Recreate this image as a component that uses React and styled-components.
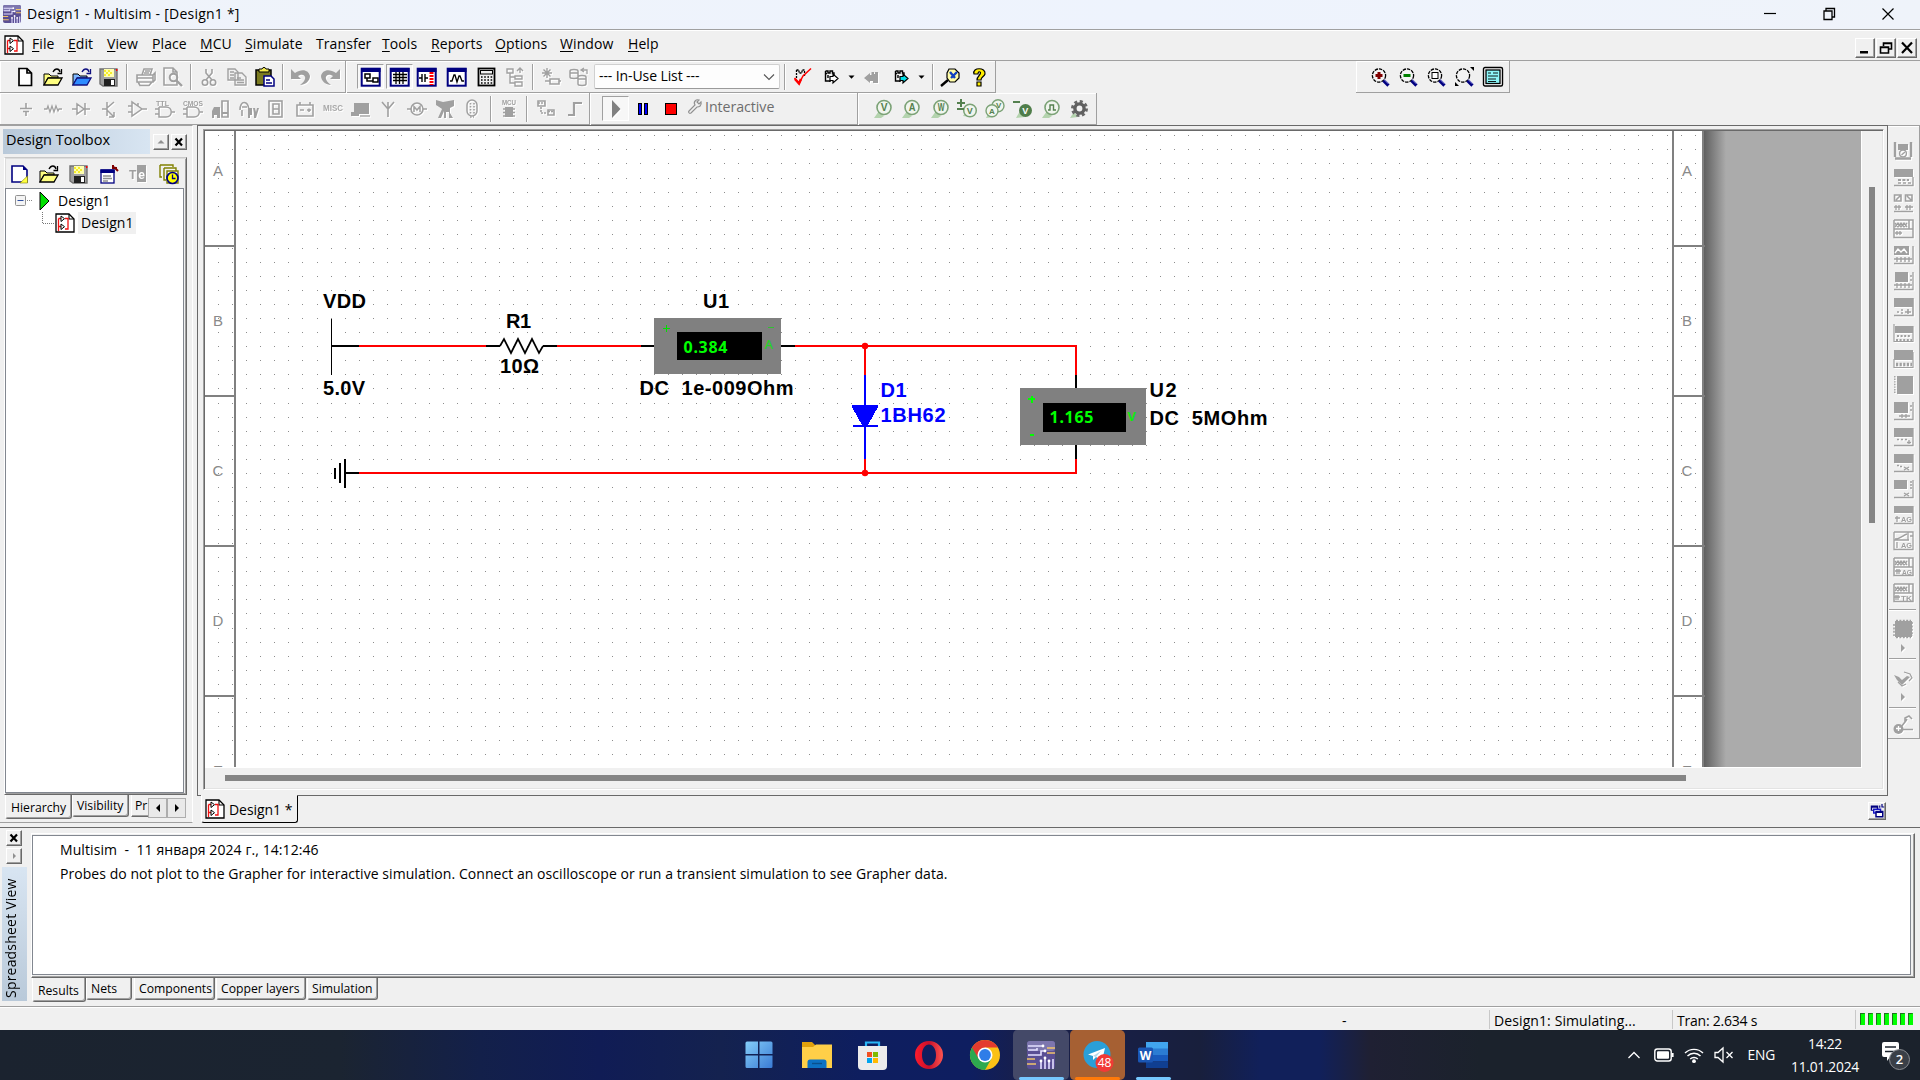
import React from "react";
import styled, { createGlobalStyle, css } from "styled-components";

const UI = `"Open Sans", "Noto Sans", "Liberation Sans", sans-serif`;
const FACE = "#f0f0f0";
const MID = "#a0a0a0";
const DARK = "#696969";

const Global = createGlobalStyle`
  * { box-sizing: border-box; }
  html, body { margin: 0; padding: 0; background: ${FACE}; overflow: hidden; }
  body { font: 14px ${UI}; color: #000; }
`;

const Screen = styled.div`
  width: 1920px; height: 1080px; overflow: hidden;
  display: flex; flex-direction: column; background: ${FACE};
`;
const Txt = styled.span`
  white-space: pre; display: inline-block;
  font-size: ${(p) => p.$s || 14}px;
  line-height: 20px;
  letter-spacing: ${(p) => p.$ls || 0}px;
  color: ${(p) => p.$c || "inherit"};
  padding-bottom: ${(p) => p.$up || 0}px;
`;
const Svg = styled.svg`
  display: block; flex: none; overflow: visible;
  ${(p) => p.$dim && css`filter: drop-shadow(1px 1px 0 #fff);`}
`;

/* ---------- icon drawings, 20 x 20 ---------- */
const K = "#000";
const G = MID;
const N = "#000080";
const P = ({ d, f = "none", s = K, w = 1.3, ...r }) => <path d={d} fill={f} stroke={s} strokeWidth={w} {...r} />;
const T = ({ x, y, s = 7, c = G, children, b, l }) => (
  <text x={x} y={y} fontSize={s} fill={c} fontFamily="Liberation Sans, sans-serif" fontWeight={b ? 700 : 400}
    textLength={l} lengthAdjust="spacingAndGlyphs">{children}</text>
);
const navyWin = (inner) => (
  <>
    <rect x="0.7" y="1.7" width="18" height="17" fill="#fff" stroke={N} strokeWidth="2" />
    <rect x="0" y="1" width="19.5" height="4" fill={N} />
    {inner}
  </>
);
const lens = (inner) => (
  <>
    <circle cx="8" cy="8.5" r="6.6" fill="#f4f4f4" stroke={K} strokeWidth="1.3" strokeDasharray="3.4 1" />
    <path d="M12.5 13.5l5 5" stroke={N} strokeWidth="3.2" />
    <path d="M13 12.4l4.500 4.500" stroke="#c0c0ff" strokeWidth="0.8" />
    {inner}
  </>
);
const schem = (
  <>
    <P d="M1 1H14L19 6V19H1Z" f="#fff" w={1.3} />
    <P d="M14 1V6H19" w={1.1} />
    <P d="M3.5 5.500V18M3.500 5.500H6M3.500 13.500H6M10 5.500H13V16H10" s="#f01010" w={1.3} />
    <P d="M6 3V8.500L9.500 5.700ZM6 11V16.500L9.500 13.700Z" f="#fff" w={1} />
  </>
);
const openFolder = (a, b, arrow) => (
  <>
    <path d="M1 7H6L8 9H15V11H5L1 18Z" fill={a} stroke={K} strokeWidth="1" />
    <path d="M1 18L5 11H19L15 18Z" fill={b} stroke={arrow} strokeWidth="1.3" />
    <P d="M10 5C12 1 16 1 17 5M18.5 2V6.500H14.500" s={arrow} />
  </>
);
const floppy = (
  <>
    <path d="M1 2H18V19H4L1 17Z" fill="#a0a0a0" stroke="#707070" strokeWidth="1.4" />
    <rect x="5" y="2" width="10" height="8" fill="#ffffb0" />
    <path d="M5 4h2M9 4h2M7 6h2M11 6h2M5 8h2M9 8h2" stroke="#f2e600" strokeWidth="1.4" />
    <rect x="5" y="12" width="11" height="7" fill="#202020" />
    <rect x="12" y="13" width="3" height="5" fill="#fff" />
    <rect x="17" y="2" width="1.4" height="2" fill="red" />
  </>
);
const probe = (ch, x = 3) => (
  <>
    <path d="M1 19L6 12L11 17L8 19Z" fill="#b4d3ae" />
    <circle cx={x + 8} cy="8.5" r="7" fill="#f0f5ee" stroke="#7ba276" strokeWidth="1.6" />
    <T x={x + 4.7} y={12.3} s={10} b c="#54804f" l={6.8}>{ch}</T>
  </>
);
const hand = (fill) => (
  <>
    <P d="M3.500 4V14H8V15M3.500 4H6V6H8V4H10.500V6H12V8M3.500 6.500H5M6 8V11" w={1.4} />
    <P d="M8 9.500H11V7L16 11.500L11 16V13.500H8Z" f={fill} w={1.2} />
  </>
);

const ICON = {
  doc: <P d="M4 1.5H12L16.5 6V18.5H4ZM12 1.5V6H16.5" f="#fff" w={1.7} />,
  open: openFolder("#ffff80", "#ffff80", K),
  openBlue: openFolder("#7eb7ff", "#2e8cff", "#101080"),
  save: floppy,
  print: <><P d="M7 8L9 2H17L15 8M2 8H18V15H2ZM3 15L5 18.5H14L17 15M2 11H18M18 8L20 6V13L18 15" s={G} w={1.6} /><P d="M10 4H15M9 6H14" s={G} /></>,
  preview: <><P d="M1 1H10L14 5V18H1ZM10 1V5H14" s={G} w={1.6} /><circle cx="10.5" cy="10.5" r="3.8" fill="none" stroke={G} strokeWidth="2" /><P d="M13 13L19 19" s={G} w={2.4} /></>,
  cut: <><P d="M7 2V6L13 13M13 2V6L7 13" s={G} w={1.6} /><circle cx="6" cy="15.5" r="2.7" fill="none" stroke={G} strokeWidth="1.6" /><circle cx="14" cy="15.5" r="2.7" fill="none" stroke={G} strokeWidth="1.6" /></>,
  copy: <P d="M1 2H8L11 5V13H1ZM8 6H15L19 10V18H8ZM3 5H7M3 8H7M3 11H7M10 11H14M10 13H17M10 15.5H17" f={FACE} s={G} w={1.4} />,
  paste: <><rect x="1" y="3" width="15" height="15" fill="#7b7b20" stroke={K} strokeWidth="1.5" /><path d="M4 5V2H7L8 0.6H10L11 2H14V5Z" fill="#f4ec50" stroke={K} /><path d="M9 9H16L19 12V19H9Z" fill="#fff" stroke={N} strokeWidth="1.5" /><P d="M11 13H15M11 16H17" s={N} /></>,
  undo: <path d="M0 2V12H10L7 9C12 6 15 9 14 12C13 15 11 16 9 18C14 18 19 14 19 9C18 3 11 1 4 6Z" fill={G} />,
  redo: <path d="M20 2V12H10L13 9C8 6 5 9 6 12C7 15 9 16 11 18C6 18 1 14 1 9C2 3 9 1 16 6Z" fill={G} />,
  win1: navyWin(<P d="M4 7H9V11H4ZM12 11H17V15H12ZM6 11V14H12" w={1.5} />),
  win2: navyWin(<P d="M3 7.5H17M3 10.5H17M3 13.5H17M6 5V17M9.5 5V17M13 5V17" w={1.3} />),
  win3: navyWin(<><P d="M2 11H5M5 7V15M8 7V15M8 11H11" w={1.4} /><path d="M14.5 5V18" stroke="red" strokeWidth="4" strokeDasharray="2 1" /></>),
  win4: navyWin(<P d="M3 14H5L7 8H8L10 15L12 9H13L15 14H17" w={1.3} />),
  calc: <><rect x="1.5" y="1.5" width="16" height="17" fill="#f0f0f0" stroke={K} strokeWidth="1.8" /><rect x="3.5" y="3.5" width="12" height="3.5" fill="none" stroke={K} /><path d="M4 10H16M4 13H16M4 16H16" stroke={K} strokeWidth="1.4" strokeDasharray="1.6 1.6" /></>,
  tree: <P d="M2 2H8V6H2ZM5 6V16H10M10 9H17V12H10ZM10 15H17V19H10ZM5 10H10M15 6V1M12 4L15 1L18 4" s={G} w={1.4} />,
  newComp: <><P d="M6 1V11M1 6H11M2.5 2.5L9.5 9.5M9.5 2.5L2.5 9.5" s={G} w={1.4} /><P d="M9 12H18V17H9ZM4 14H9M18 14H20" s={G} w={1.6} /></>,
  database: <><P d="M1 4C1 2 9 2 9 4V10C9 12 1 12 1 10ZM1 6H9M9 10C9 8 17 8 17 10V17C17 19 9 19 9 17ZM9 12H17" s={G} w={1.5} /><P d="M13 3H18V7M15 1L12 3L15 5" s={G} w={1.3} /></>,
  check: <><P d="M3.500 3V12M3.500 3H6V6H9V3H11.500V10" w={1.3} strokeDasharray="2 1" /><P d="M1.500 11L6 16.500L10 9L18 1.500" s="red" w={1.5} /><P d="M2 12L6 16.500L8 12" s="red" w={2.6} /></>,
  handR: hand("#fff"),
  handL: <path d="M2 11L8 6V8H9.500V5H12V7H13V5H16V16H11V14H8V16Z" fill={G} />,
  handC: hand("#00e0e8"),
  find: <><P d="M9 2H15L19 6V11L15 15H10L7 11V6Z" f="#fffca8" w={1.2} /><path d="M10 5L15 11M11 11L17 5" stroke="#1040c0" strokeWidth="2.4" /><P d="M8 13L1 19" w={2.4} /></>,
  help: <><path d="M5 7C3 0 17 0 16 7C15 10 12 10 12 13H8C8 9 12 8 11.5 5.5C10 4 9 5 9 7Z" fill="#ffee00" stroke={K} strokeWidth="1.2" /><path d="M8 15H12V19H8Z" fill="#ffee00" stroke={K} strokeWidth="1.2" /></>,
  zin: lens(<path d="M8 5V12M4.5 8.5H11.5" stroke="#800000" strokeWidth="3" />),
  zout: lens(<path d="M4.5 8.5H11.5" stroke="#008000" strokeWidth="3" />),
  zarea: lens(<rect x="5" y="5.5" width="6" height="6" fill="#fff" stroke={K} />),
  zfit: <>{lens(null)}<path d="M15 0H19V4ZM0 15V19H4Z" fill={K} /></>,
  zfull: <><rect x="0.5" y="0.5" width="19" height="18.5" rx="1.5" fill="#fff" stroke={K} strokeWidth="1.4" /><rect x="3" y="3" width="14" height="13.5" fill="#8df6f8" stroke={K} strokeWidth="1.3" /><P d="M5 6H8M10 6H15M5 9H15M5 12H13M5 14.5H13" w={0.9} /></>,
  /* component row */
  src: <P d="M10 4V9M4 9.5H16M7 12.5H13M10 13V17" s={G} w={1.6} />,
  res: <P d="M1 10H4L5 7L7 13L9 7L11 13L13 7L15 12L16 10H19" s={G} w={1.3} />,
  dio: <P d="M1 10H6M6 5V15L13 10ZM14 4V16M14 10H19" s={G} w={1.5} />,
  tra: <P d="M4 10H9M9 3V17M9 9L16 3M9 11L16 18M16 18V13M16 18H11" s={G} w={1.5} />,
  opa: <P d="M5 3V17L15 10ZM1 7H5M1 13H5M15 10H20M11 4V7" s={G} w={1.5} />,
  ttl: <><P d="M4 8H11C18 8 18 18 11 18H4V8M0 10H4M0 15H4M17 13H20" s={G} w={1.5} /><T x={1} y={6.5} b l={13}>TTL</T></>,
  cmos: <><P d="M4 8H11C18 8 18 18 11 18H4V8M0 10H4M0 15H4M17 13H20" s={G} w={1.5} /><T x={0} y={6.5} b l={20}>CMOS</T></>,
  mdig: <><path d="M3 8H9V19H6V16H3V19H1V12Z" fill={G} /><P d="M11 2H17V18H11Z" s={G} w={1.7} /><P d="M11 14H17" s={G} w={2} /></>,
  mix: <><P d="M1 11C1 1 9 1 10 11M3 8H8M3 11V17" s={G} w={1.6} /><path d="M9 9H13V16H11V19H9ZM14 9H16L17 13L18 9H20L17 19H15V14Z" fill={G} /></>,
  ind: <><rect x="3" y="2" width="13" height="16" fill="none" stroke={G} strokeWidth="1.6" /><P d="M7 5H13V15H7ZM7 10H13" s={G} w={1.6} /></>,
  pow: <P d="M2 6H18V17H2ZM5 3V6M15 3V6M5 11H9M12 11H16M14 9.5V13" s={G} w={1.6} />,
  misc: <T x={0} y={12} s={8.500} b c="#a8a8a8" l={20}>MISC</T>,
  adv: <><path d="M3 4H18V15H3Z" fill={G} /><path d="M0 13H8V17H0Z" fill={G} /><P d="M9 17H19" s={G} /></>,
  rf: <P d="M10 3V18M4 3L10 10L16 3" s={G} w={1.6} />,
  elm: <><circle cx="10" cy="10" r="6" fill="none" stroke={G} strokeWidth="1.6" /><P d="M0 10H4M16 10H20M7 13V7.5L10 11L13 7.5V13" s={G} w={1.5} /></>,
  ni: <path d="M1 1L8 3L19 1V7L15 9V14L18 19H14V13H11V19H9V12L6 19H3L7 10L1 6Z" fill={G} />,
  conn: <><rect x="5" y="1" width="10" height="16" rx="5" fill="none" stroke={G} strokeWidth="1.5" /><path d="M8.5 4V15M12 4V15M8 18H12" stroke={G} strokeWidth="1.6" strokeDasharray="1.6 1.4" /></>,
  mcu: <><T x={3} y={6} b l={14}>MCU</T><path d="M6 8H14V18H6Z" fill={G} /><path d="M4 10H16M4 13.5H16M4 17H16" stroke={G} strokeWidth="1.7" /></>,
  hier: <><path d="M2 2H9V7H2ZM12 11H18V16H12Z" fill="none" stroke={G} strokeWidth="1.6" /><path d="M2 4H9M5 8V14H11M12 12.5H18" stroke={G} strokeWidth="1.6" strokeDasharray="2 1" fill="none" /></>,
  bus: <P d="M4 16H10V4H18" s={G} w={2.2} />,
  play: <path d="M6 1V19L14.5 10Z" fill="#808080" />,
  pause: <><rect x="5.5" y="4.5" width="3" height="11" fill="#0000ff" stroke={K} /><rect x="11.5" y="4.5" width="3" height="11" fill="#0000ff" stroke={K} /></>,
  stop: <rect x="4.5" y="4.5" width="11" height="11" fill="red" stroke={K} />,
  wrench: <P d="M5 12L11 6C9 3 12 0 15 1L13 3L15 5L17 3C18 7 15 8 13 8L7 14C5 15 4 13 5 12Z" s="#909090" w={1.2} />,
  pV: probe("V"), pA: probe("A"), pW: probe("W"),
  pPM: <><path d="M6 17L9 12L14 18Z" fill="#b4d3ae" /><circle cx="13" cy="11.5" r="6.3" fill="#f0f5ee" stroke="#7ba276" strokeWidth="1.5" /><T x={9.8} y={15} s={9} b c="#54804f">V</T><P d="M4 0V8M0 4H8M0 10H7" s="#54804f" w={2} /></>,
  pAV: <><path d="M1 19L4 13L10 18Z" fill="#b4d3ae" /><circle cx="13" cy="6.7" r="6" fill="#f0f5ee" stroke="#7ba276" strokeWidth="1.4" /><circle cx="7" cy="11.7" r="6" fill="#f0f5ee" stroke="#7ba276" strokeWidth="1.4" /><T x={4} y={15} s={8} b c="#54804f">A</T><T x={11} y={8.5} s={8} b c="#54804f">V</T></>,
  pRef: <><path d="M3 19L7 12L12 18Z" fill="#b4d3ae" /><circle cx="12.5" cy="11.5" r="6.5" fill="#4f7d4a" /><T x={9.3} y={15} s={9} b c="#fff">V</T><P d="M0 3H7" s="#54804f" w={2} /></>,
  pDig: <>{probe("")}<P d="M7 11H9V6H12.5V11H15" s="#54804f" w={1.4} /></>,
  gear: <><path d="M1 19L5 13L9 18Z" fill="#b4d3ae" /><circle cx="10.5" cy="9.500" r="7" fill="none" stroke="#686868" strokeWidth="3" strokeDasharray="3 2.5" /><circle cx="10.5" cy="9.500" r="4.600" fill="#f0f0f0" stroke="#606060" strokeWidth="3.4" /></>,
  /* toolbox row */
  newDesign: <><path d="M3 2H14L18 6V18H3Z" fill="#fff" stroke={N} strokeWidth="1.6" /><path d="M14 2V6H18Z" fill={N} /><path d="M18.5 12V19H11Z" fill="#ffff40" stroke="#808000" strokeWidth="0.6" /></>,
  props: <><rect x="2" y="6" width="13" height="13" fill="#fff" stroke={N} strokeWidth="1.3" /><rect x="1.4" y="5.4" width="14.4" height="3.6" fill={N} /><P d="M4 12H12M4 14.5H13M4 17H9" s="#909090" /><P d="M19 7L15 3M14 1V4H18" s="#800000" w={2} /></>,
  rename: <><path d="M8 1H17V18H8Z" fill={G} /><T x={0} y={15} s={12} b>T</T><T x={9.3} y={15} s={12} b c="#fff">e</T></>,
  history: <><P d="M1 1H14V3M1 1V13H3M5 4H17V7M5 4V16H7M8 7H19V19H8Z" s="#808000" w={1.4} f="#fbfbf0" /><circle cx="13.5" cy="14" r="5.5" fill="#ffff00" stroke={N} strokeWidth="1.7" /><P d="M13.5 10.5V14.5H16.5" s={N} /></>,
  run: <path d="M5 1V19L14 10Z" fill="#00e000" stroke={K} strokeWidth="1" />,
  schem,
  cascade: <><path d="M1 2H11V9H1Z" fill={N} /><path d="M4 6H15V13H4Z" fill="#1414c8" /><path d="M7 9H18V18H7Z" fill={N} /><path d="M9 12H16V16H9Z" fill="#fff" /><path d="M3 5H9V6H4V8H3ZM6 8H13V9H7V11H6Z" fill="#fff" /><path d="M13 2V5M16 0V4H19" stroke={N} strokeWidth="1.6" fill="none" /></>,
};

const Icon = ({ n, size = 20, dim }) => (
  <Svg width={size} height={size} viewBox="0 0 20 20" $dim={dim} shapeRendering="auto">{ICON[n]}</Svg>
);

/* ---------- title + menu ---------- */
const TitleBar = styled.div`
  height: 29px; flex: none; background: linear-gradient(90deg, #eff3fa, #eef3fd 60%, #eff3fa);
  display: flex; align-items: center; padding: 0 0 1px 3px;
`;
const TitleText = styled.div`padding-left: 6px; flex: 1; line-height: 20px;`;
const WinButtons = styled.div`display: flex; gap: 39px; padding-right: 22px;`;
const Spacer = styled.div`width: ${(p) => p.$w}px; flex: none;`;

const MenuBar = styled.div`
  height: 32px; flex: none; border-top: 1px solid ${MID}; border-bottom: 1px solid ${MID};
  box-shadow: inset 0 1px #fff; display: flex; align-items: center; padding-left: 4px;
`;
const MenuItem = styled.div`width: ${(p) => p.$w}px; line-height: 28px; padding-bottom: 2px; font-size: 14px; letter-spacing: 0.08px; u { text-underline-offset: 2px; }`;
const MdiButtons = styled.div`display: flex; gap: 1px; margin-left: auto; padding: 5px 3px 0 0;`;
const Raised = styled.div`
  width: ${(p) => p.$w || 20}px; height: ${(p) => p.$h || 20}px; flex: none; background: ${FACE};
  border: 1px solid; border-color: #fff ${DARK} ${DARK} #fff;
  box-shadow: inset -1px -1px ${MID};
  display: flex; align-items: center; justify-content: center;
`;

const MENU = [["", "File", 36], ["", "Edit", 39], ["", "View", 45], ["", "Place", 48], ["", "MCU", 45], ["", "Simulate", 71],
  ["Tra", "nsfer", 66], ["", "Tools", 49], ["", "Reports", 64], ["", "Options", 65], ["", "Window", 68], ["", "Help", 60]];

/* ---------- toolbars ---------- */
const ToolRow = styled.div`height: 32px; flex: none; display: flex;`;
const Strip = styled.div`
  display: flex; align-items: center; height: 32px; width: ${(p) => p.$w}px;
  border-bottom: 1px solid ${MID}; border-right: 1px solid ${MID};
  box-shadow: inset 0 1px #fff, inset 1px 0 #fff;
  margin-left: ${(p) => p.$gap || 0}px;
`;
const Slot = styled.div`margin-left: ${(p) => p.$gap}px; flex: none; display: flex; align-items: center;`;
const Sep = styled.div`
  width: 2px; height: ${(p) => (p.$full ? 32 : 26)}px;
  border-left: 1px solid ${MID}; border-right: 1px solid #fff;
`;
const Pressed = styled.div`
  width: ${(p) => p.$w}px; height: 25px; display: flex; align-items: center; justify-content: center;
  background: #f7f7f7; border: 1px solid; border-color: ${MID} #fff #fff ${MID};
`;
const Combo = styled.div`
  width: 186px; height: 25px; background: #fdfdfd; border: 1px solid #d0d0d0; border-bottom-color: #9a9a9a; border-radius: 2px;
  display: flex; align-items: center; justify-content: space-between; padding: 0 4px;
`;
const Mode = styled.div`width: 100px; margin-right: -100px; padding-bottom: 3px;`;
const Tri = () => <Svg width="9" height="20" viewBox="0 0 9 20"><path d="M1.5 8.5H7.5L4.5 11.8Z" fill="#000" /></Svg>;

const Row = ({ items }) => {
  let x = 0;
  return items.map(([left, kind, arg], i) => {
    let w = 20;
    let node;
    if (kind === "|") { w = 2; node = <Sep />; }
    else if (kind === "||") { w = 2; node = <Sep $full />; }
    else if (kind === "v") { w = 9; node = <Tri />; }
    else if (kind === "press") { w = 27; node = <Pressed $w={27}><Icon n={arg} dim={arg === "play"} /></Pressed>; }
    else if (kind === "combo") { w = 186; node = <Combo><Txt $ls={-0.1} $up={1}>{arg}</Txt><Svg width="12" height="8" viewBox="0 0 12 8"><path d="M1 1.5L6 6.5L11 1.5" fill="none" stroke="#555" strokeWidth="1.1" /></Svg></Combo>; }
    else if (kind === "label") { w = 0; node = <Mode><Txt $s={14.2} $ls={-0.05} $c="#6d6d6d">{arg}</Txt></Mode>; }
    else node = <Icon n={kind} dim={arg === "d"} />;
    const gap = left - x;
    x = left + w;
    return <Slot key={i} $gap={gap}>{node}</Slot>;
  });
};

const ROW1 = [[15, "doc"], [43, "open"], [72, "openBlue"], [99, "save"], [126, "|"], [135, "print", "d"], [163, "preview", "d"], [190, "|"],
  [199, "cut", "d"], [227, "copy", "d"], [255, "paste"], [282, "|"], [291, "undo", "d"], [320, "redo", "d"], [345, "||"],
  [357, "press", "win1"], [386, "press", "win2"], [417, "win3"], [447, "win4"], [477, "calc"], [505, "tree", "d"], [532, "|"],
  [541, "newComp", "d"], [569, "database", "d"], [594, "combo", "--- In-Use List ---"], [784, "|"], [793, "check"], [822, "handR"],
  [847, "v"], [862, "handL", "d"], [892, "handC"], [917, "v"], [932, "|"], [940, "find"], [969, "help"]];
const ROW2 = [[16, "src", "d"], [43, "res", "d"], [71, "dio", "d"], [98, "tra", "d"], [127, "opa", "d"], [155, "ttl", "d"], [183, "cmos", "d"],
  [211, "mdig", "d"], [239, "mix", "d"], [266, "ind", "d"], [295, "pow", "d"], [323, "misc", "d"], [351, "adv", "d"], [378, "rf", "d"],
  [407, "elm", "d"], [435, "ni", "d"], [462, "conn", "d"], [490, "|"], [499, "mcu", "d"], [526, "|"], [536, "hier", "d"], [564, "bus", "d"],
  [589, "||"], [602, "press", "play"], [633, "pause"], [661, "stop"], [684, "wrench"], [705, "label", "Interactive"], [857, "||"],
  [873, "pV"], [901, "pA"], [930, "pW"], [957, "pPM"], [985, "pAV"], [1013, "pRef"], [1041, "pDig"], [1069, "gear"]];
const ZOOM = [[15, "zin"], [43, "zout"], [71, "zarea"], [99, "zfit"], [127, "zfull"]];

/* ---------- middle ---------- */
const Middle = styled.div`height: 703px; flex: none; display: flex;`;
const Toolbox = styled.div`
  width: 193px; flex: none; padding: 3px 0 0 3px; border-top: 1px solid ${MID}; border-right: 1px solid #fff;
  height: 698px; border-bottom: 1px solid ${MID}; display: flex; flex-direction: column;
`;
const BoxHead = styled.div`display: flex; height: 25px; align-items: center; gap: 2px;`;
const HeadTitle = styled.div`width: 147px; height: 25px; padding: 0 0 0 3px; line-height: 21px; font-size: 14.5px; margin-right: 1px;
  background: linear-gradient(90deg, #b9c9d9, #d8e5f2);`;
const BoxBody = styled.div`
  margin: 3px 0 0 1px; width: 183px; height: 638px; display: flex; flex-direction: column;
  border: 1px solid; border-color: #c8c8c8 ${DARK} ${DARK} #fff; box-shadow: inset 1px 1px #dcdcdc, inset -1px -1px ${MID};
`;
const BoxTools = styled.div`height: 30px; flex: none; display: flex; align-items: center; gap: 10px; padding: 2px 0 0 4px;`;
const Tree = styled.div`margin: 0 2px 0 0; height: 605px; flex: none; background: #fff; border: 1px solid #828790; padding-top: 1px;`;
const TreeRow = styled.div`height: 22px; display: flex; align-items: center; padding-left: ${(p) => p.$p}px;`;
const TreeLabel = styled.div`height: 22px; line-height: 21px; padding: 0 ${(p) => (p.$sel ? 3 : 0)}px; margin-left: ${(p) => p.$m}px;
  background: ${(p) => (p.$sel ? "#f0f0f0" : "none")};`;
const Tabs = styled.div`display: flex; align-items: flex-start; padding-left: ${(p) => p.$p || 0}px;`;
const Tab = styled.div`
  width: ${(p) => p.$w}px; height: ${(p) => (p.$on ? 24 : 22)}px; line-height: ${(p) => (p.$on ? 25 : 21)}px; padding-left: ${(p) => p.$p || 5}px;
  font-size: 12.2px; letter-spacing: ${(p) => p.$ls || 0}px; overflow: hidden; white-space: nowrap; flex: none; margin-right: ${(p) => p.$m ?? 1}px;
  border: 1px solid; border-top: 0; border-color: #fff ${DARK} ${DARK} #fff; box-shadow: inset -1px -1px ${MID}; border-radius: 0 0 3px 3px;
  ${(p) => p.$cut && css`border-right: 0; box-shadow: inset 0 -1px ${MID}; border-radius: 0;`}
`;
const Arrows = styled.div`display: flex;`;
const ArrowBtn = styled.div`width: 19px; height: 20px; margin-top: 3px; border: 1px solid #adadad; background: #e9e9e9; display: flex; align-items: center; justify-content: center;`;

const Mdi = styled.div`width: 1691px; flex: none; margin-left: 4px; display: flex; flex-direction: column;`;
const MdiFrame = styled.div`
  height: 671px; border: 1px solid ${DARK}; padding: 3px 3px 0 5px; border-top-width: 1px;
`;
const Canvas = styled.div`
  height: 661px; width: 1681px; border: 1px solid; border-color: ${MID} #fff #fff ${MID};
  box-shadow: inset 1px 1px ${DARK}, inset -1px -1px #e3e3e3;
  padding: 1px 1px 1px 1px; display: grid; grid-template-columns: 1657px 1fr; grid-template-rows: 637px 1fr;
`;
const Sheet = styled.div`border-right: 1px solid #fff; border-bottom: 1px solid #fff; height: 637px; overflow: hidden;`;
const VBar = styled.div`padding: 56px 0 0 7px; &::before { content: ""; display: block; width: 6px; height: 336px; background: #858585; }`;
const HBar = styled.div`padding: 7px 0 0 20px; &::before { content: ""; display: block; width: 1461px; height: 6px; background: #858585; }`;
const DocTabs = styled.div`height: 28px; margin-top: -1px; padding: 0 2px 0 4px; display: flex; justify-content: space-between;`;
const DocTab = styled.div`
  width: 97px; height: 28px; background: ${FACE}; display: flex; align-items: center; gap: 4px; padding-left: 3px;
  border: 1px solid #000; border-top-color: ${FACE}; border-left-color: #fff; border-radius: 0 0 3px 3px; letter-spacing: -0.05px;
`;
const DocTools = styled.div`padding-top: 7px;`;

const SideBar = styled.div`
  width: 32px; height: 614px; border-top: 1px solid ${MID}; border-right: 1px solid ${MID}; border-bottom: 1px solid ${MID};
  box-shadow: inset 0 1px #fff; padding: 12px 0 0 5px; display: flex; flex-direction: column;
`;
const SideSlot = styled.div`height: ${(p) => p.$h || 26}px; flex: none; display: flex; align-items: center;`;
const SideSep = styled.div`height: 2px; flex: none; width: 27px; margin: ${(p) => p.$t}px 0 ${(p) => p.$b}px -4px; border-top: 1px solid ${MID}; border-bottom: 1px solid #fff;`;

/* ---------- schematic ---------- */
const dots = (() => {
  let d = "";
  for (let j = 0; j < 45; j++) {
    const y = Math.floor(135.8125 + 14.0625 * j);
    for (let i = 0; i < 106; i++) d += `M${Math.floor(218.5625 + 14.0625 * i)} ${y}h1v1h-1z`;
  }
  return d;
})();
const L = ({ d, c = "#000", w = 2 }) => <path d={d} fill="none" stroke={c} strokeWidth={w} />;
const Label = styled.text`
  white-space: pre; font: 700 20px "Liberation Sans", Arial, sans-serif;
`;
const Lbl = ({ x, y, w, c = "#000", children }) => <Label x={x} y={y} fill={c} textLength={w}>{children}</Label>;
const Grn = ({ x, y, s = 16, w, c = "#00ff00", b = 700, children }) => (
  <text x={x} y={y} fill={c} fontFamily="Noto Sans, sans-serif" fontWeight={b} fontSize={s} textLength={w}>{children}</text>
);
const Clip = styled(Svg)`overflow: hidden;`;
const Schematic = () => (
  <Clip width="1656" height="636" viewBox="205 131 1656 636" shapeRendering="crispEdges">
    <defs>
      <linearGradient id="edge" x1="0" x2="1" y1="0" y2="0">
        <stop offset="0" stopColor="#606060" /><stop offset="1" stopColor="#ababab" />
      </linearGradient>
    </defs>
    <rect x="205" y="131" width="1499" height="636" fill="#fff" />
    <rect x="1704" y="131" width="157" height="636" fill="#ababab" />
    <rect x="1704" y="131" width="22" height="636" fill="url(#edge)" />
    <path d={dots} fill="#8c8c8c" />
    <L d="M235 131V767M1673 131V767M1703 131V767M205 246H235M205 396H235M205 546H235M205 696H235M1674 246H1705M1674 396H1705M1674 546H1705M1674 696H1705" c="#808080" />
    {["A", "B", "C", "D", "E"].map((t, i) => (
      <g key={t} fill="#8a8a8a" fontFamily="Liberation Sans, sans-serif" fontSize="15" textAnchor="middle">
        <text x="218" y={176 + i * 150}>{t}</text>
        <text x="1687" y={176 + i * 150}>{t}</text>
      </g>
    ))}
    <L d="M359 346H486M557 346H641M795 346H1077M359 473H1077M1076 346V375M1076 459V473M865 346V375M865 459V473" c="red" />
    <L d="M331.5 319V375" w={1} />
    <L d="M331 346H359M486 346H500M543 346H557M641 346H654M781 346H795M1076 375V389M1076 445V459M345 473H359" />
    <L d="M345 459V488M340 463V483M335 468V479" />
    <path d="M500 346L504 339L511 353L518 339L525 353L532 339L539 353L543 346" fill="none" stroke="#000" strokeWidth="1.7" shapeRendering="auto" />
    <circle cx="865" cy="346" r="3.2" fill="red" shapeRendering="auto" />
    <circle cx="865" cy="473" r="3.2" fill="red" shapeRendering="auto" />
    <L d="M865 375V459M853 426H878" c="#0000ff" />
    <path d="M852 405H878V407L868 425H862L852 407Z" fill="#0000ff" />
    <rect x="654" y="318" width="127" height="56" fill="#808080" />
    <rect x="677" y="332" width="85" height="28" fill="#000" />
    <rect x="1020" y="388" width="126" height="57" fill="#808080" />
    <rect x="1043" y="403" width="83" height="29" fill="#000" />
    <Grn x={683.5} y={353} w={44}>0.384</Grn>
    <Grn x={1049.5} y={423} w={44}>1.165</Grn>
    <path d="M663 328.5H670M666.5 325V332" stroke="#00e000" strokeWidth="1" />
    <path d="M768 327.5H774" stroke="#30c030" strokeWidth="1" />
    <Grn x={764.5} y={349} s={13} b={500} c="#28d028">A</Grn>
    <path d="M1028 399H1035M1031.5 395.5V402.5M1030 434.5H1033.5" stroke="#00ff00" strokeWidth="2" />
    <Grn x={1127.5} y={421} s={13} c="#10e810">V</Grn>
    <Lbl x={323} y={308} w={43}>VDD</Lbl>
    <Lbl x={323} y={395} w={42}>5.0V</Lbl>
    <Lbl x={506} y={328} w={25}>R1</Lbl>
    <Lbl x={500} y={373} w={39}>10Ω</Lbl>
    <Lbl x={703} y={308} w={26}>U1</Lbl>
    <Lbl x={639.5} y={395} w={154}>{"DC\u00a0 1e-009Ohm"}</Lbl>
    <Lbl x={880.5} y={397} w={26} c="#0000ff">D1</Lbl>
    <Lbl x={880.5} y={422} w={65} c="#0000ff">1BH62</Lbl>
    <Lbl x={1149.5} y={397} w={27}>U2</Lbl>
    <Lbl x={1149.5} y={425} w={118}>{"DC\u00a0 5MOhm"}</Lbl>
  </Clip>
);

/* ---------- instrument strip drawings ---------- */
const ledge = "M1 1V18.5H20V1";
const wave = "M2 4L5 8L8 4L11 8L14 4M2 8L5 4L8 8L11 4L14 8";
const INST = [
  <><path d="M5 3H15V9H5Z" fill={G} /><P d="M2 1V16M18 1V16M2 17.5H18" s={G} w={2.4} /><circle cx="10" cy="12.5" r="3.4" fill="none" stroke={G} strokeWidth="1.4" /><P d="M8.5 14L12 11" s={G} /></>,
  <><path d="M1 2H20V10H1Z" fill={G} /><path d="M5 13H16" stroke={G} strokeWidth="2" strokeDasharray="3 1.4" /><P d="M1 18.5H20V10M5 16H8M10 16H13M15 16H18" s={G} w={1.4} /></>,
  <><P d="M1.5 2H8V8H1.5ZM12.5 2H19V8H12.5ZM3 7L7 3M14 3L18 7" s={G} w={1.6} /><P d="M1 14H8M3 12V17M6 12V17M12 14H20M14 12V17M17 12V17M1 18.5H20" s={G} w={1.3} /></>,
  <><P d={ledge + "H1M1 10H20M16 1V10"} s={G} w={1.5} /><P d={wave} s={G} w={1.3} /><P d="M2 14H9M4 12V16M7 12V16" s={G} w={1.3} /></>,
  <><path d="M1 1H16V10H1Z" fill={G} /><P d="M2 8L5 4L8 7L11 4L14 8" s="#fff" /><P d="M1 14H19M4 12V17M8 12V17M12 12V17M16 12V17M1 18.5H20V1" s={G} w={1.4} /></>,
  <><path d="M2 1H15V11H2Z" fill={G} /><P d="M17 5H19M17 9H19M1 14H19M4 12V17M8 12V17M12 12V17M16 12V17M1 18.5H20V1" s={G} w={1.3} /></>,
  <><path d="M1 1H20V10H1Z" fill={G} /><P d="M4 15H6M8 13H10M8 16H10M12 15H18M15 12V17M1 18.5H20V1" s={G} w={1.6} /></>,
  <><path d="M2 3H20V10H2Z" fill={G} /><path d="M4 13H18M3 17H19" stroke={G} strokeWidth="2.2" strokeDasharray="2 1.6" /><P d="M1 1V18.5H20V3" s={G} w={1.2} /></>,
  <><path d="M1 1H20V11H1Z" fill={G} /><path d="M3 15.5H19" stroke={G} strokeWidth="3.4" strokeDasharray="2.2 1.4" /><P d="M1 10V18.5H20V3" s={G} w={1.2} /></>,
  <><path d="M4 1H20V19H4Z" fill={G} /><path d="M1.8 1V18" stroke={G} strokeWidth="1.4" strokeDasharray="1.4 1.2" /></>,
  <><path d="M1 1H15V12H1Z" fill={G} /><P d="M17 5H19M17 9H19M6 15H17M9 13V17M13 13V17M1 18.5H20V1" s={G} w={1.3} /></>,
  <><path d="M1 1H20V10H1Z" fill={G} /><P d="M4 12.5H6M8 12.5H10M12 12.5H14M14 15.5H18M16 13V17M1 18.5H20V1" s={G} w={1.3} /></>,
  <><path d="M1 1H20V10H1Z" fill={G} /><P d="M4 12.5H6M7 13.5H9M11 14L16 17M16 14L11 17M1 18.5H20V1" s={G} w={1.3} /></>,
  <><path d="M1 1H14V10H1Z" fill={G} /><P d="M17 3H19M17 6H19M17 9H19M11 14L16 17M16 14L11 17M1 18.5H20V1" s={G} w={1.3} /></>,
  <><path d="M1 1H20V8H1Z" fill={G} /><P d="M4 11V17M2 13H7M1 18.5H20V1" s={G} w={1.3} /><T x={8} y={17} s={7.5} b l={11}>AG</T></>,
  <><P d={ledge + "H1M1 9H16M15 1V9M2 8C8 8 10 4 14 3M17 5H20"} s={G} w={1.3} /><T x={8} y={17} s={7.5} b l={11}>AG</T><P d="M4 11V17" s={G} /></>,
  <><P d={ledge + "H1M1 10H20M16 1V10"} s={G} w={1.5} /><P d={wave} s={G} w={1.3} /><T x={9} y={17.5} s={7.5} b l={10}>AG</T><P d="M2 14H8M4 12V17M6 12V17" s={G} /></>,
  <><P d={ledge + "H1M1 10H20M16 1V10"} s={G} w={1.5} /><P d={wave} s={G} w={1.3} /><T x={8} y={17.5} s={7.5} b l={11}>TK</T><P d="M1 14H7M3 12V17M5 12V17" s={G} /></>,
];
const Dim = ({ children }) => <Svg width="20" height="20" viewBox="0 0 20 20" $dim>{children}</Svg>;
const sideArrow = <path d="M8 6V14L12 10Z" fill={G} />;

/* ---------- spreadsheet view ---------- */
const Lower = styled.div`height: 180px; flex: none; border-top: 1px solid ${DARK}; border-bottom: 1px solid ${MID}; margin-top: -1px; display: flex;`;
const Rail = styled.div`width: 31px; padding: 2px 0 0 6px; display: flex; flex-direction: column; gap: 2px;`;
const RailTitle = styled.div`
  width: 25px; height: 134px; margin: 1px 0 0 -4px; background: linear-gradient(0deg, #d8e5f2, #b9c9d9);
  writing-mode: vertical-rl; transform: rotate(180deg); line-height: 18px; padding-top: 3px; font-size: 14px; letter-spacing: 0.2px; white-space: nowrap;
`;
const Results = styled.div`width: 1884px; padding-top: 5px;`;
const ListFrame = styled.div`
  height: 145px; border: 1px solid; border-color: #fff ${DARK} ${DARK} #fff; box-shadow: inset -1px -1px ${MID};
  padding: 1px 3px 2px 0;
`;
const List = styled.div`height: 140px; background: #fff; border: 1px solid #828790; padding: 2px 0 0 27px;`;
const Line = styled.div`height: 24px; line-height: 24px; font-size: 14px; white-space: pre; letter-spacing: ${(p) => p.$ls}px;`;

/* ---------- status ---------- */
const Status = styled.div`height: 23px; flex: none; border-top: 1px solid #fff; display: flex; padding-top: 2px;`;
const Cell = styled.div`width: ${(p) => p.$w}px; height: 19px; line-height: 21px; padding-left: ${(p) => p.$p}px; border-right: 1px solid #c8c8c8; white-space: pre; letter-spacing: ${(p) => p.$ls || 0}px;`;
const Leds = styled.div`display: flex; gap: 3px; padding: 3px 0 0 4px;`;
const Led = styled.div`width: 5px; height: 12px; background: #00ff00; border: 1px solid #00ff00; border-left-color: #207020; border-top-color: #207020;`;

/* ---------- taskbar ---------- */
const Taskbar = styled.div`
  height: 50px; flex: none; display: flex; align-items: stretch; color: #fff;
  background: linear-gradient(90deg, #1b232f 0, #1b2431 340px, #13204a 480px, #101c55 600px, #14224f 720px, #0e1e5f 860px, #0e1e60 970px, #191f48 1030px, #181f44 1130px, #181f3c 1200px, #11205a 1260px, #11205a 1320px, #1f2033 1370px, #1b222c 1480px);
`;
const Apps = styled.div`margin-left: 731px; display: flex;`;
const AppSlot = styled.div`
  width: 56.3px; display: flex; align-items: center; justify-content: center; position: relative;
  padding-left: ${(p) => p.$pl || 0}px;
  border-radius: 5px; background: ${(p) => p.$bg || "none"}; background-clip: content-box;
  &::after { content: ""; position: absolute; bottom: 0; height: 3px; border-radius: 2px; width: ${(p) => p.$bar || 0}px; background: ${(p) => p.$c || "#76c8ff"}; }
`;
const Tray = styled.div`margin-left: auto; display: flex; align-items: center; padding-right: 9px;`;
const Clock = styled.div`width: 80px; margin-left: 10px; text-align: center; font-size: 13.8px; line-height: 23px; letter-spacing: -0.25px;`;

const circuit = (
  <>
    <rect width="28" height="28" rx="3" fill="#5a4f94" />
    <rect width="28" height="10" rx="3" fill="#7d76ae" />
    <path d="M1 5H16M1 9H10V7M1 14H14V10H18" stroke="#e4e0ff" strokeWidth="1.6" fill="none" />
    <path d="M20 7H28M20 12H28M0 18H8M0 23H9" stroke="#f0c46a" strokeWidth="1.6" />
    <path d="M14 28V20M18 28V17M22 28V20M26 28V18" stroke="#e4e0ff" strokeWidth="1.6" />
    <g fill="#fff"><circle cx="16" cy="5" r="1.4" /><circle cx="18" cy="10" r="1.4" /><circle cx="14" cy="20" r="1.4" /><circle cx="18" cy="17" r="1.4" /><circle cx="22" cy="20" r="1.4" /></g>
  </>
);
const A = ({ children }) => <Svg width="30" height="30" viewBox="0 0 30 30">{children}</Svg>;

export default function App() {
  return (
    <Screen>
      <Global />
      <TitleBar>
        <Svg width="18" height="18" viewBox="0 0 28 28">{circuit}</Svg>
        <TitleText><Txt $ls={0.23}>Design1 - Multisim - [Design1 *]</Txt></TitleText>
        <WinButtons>
          <Svg width="20" height="16" viewBox="0 0 20 16"><P d="M4 7.5H16" w={1.2} /></Svg>
          <Svg width="20" height="16" viewBox="0 0 20 16"><P d="M5 5H13V13.5H5ZM7 5V2.5H15.5V11H13" w={1.3} /></Svg>
          <Svg width="20" height="16" viewBox="0 0 20 16"><P d="M4.5 2.5L15.5 13.5M15.5 2.5L4.5 13.5" w={1.2} /></Svg>
        </WinButtons>
      </TitleBar>
      <MenuBar>
        <Icon n="schem" />
        <Spacer $w={8} />
        {MENU.map(([a, b, w]) => <MenuItem key={b} $w={w}>{a}<u>{b[0]}</u>{b.slice(1)}</MenuItem>)}
        <MdiButtons>
          <Raised><Svg width="14" height="14" viewBox="0 0 14 14"><path d="M2 10H10V12.5H2Z" /></Svg></Raised>
          <Raised><Svg width="14" height="14" viewBox="0 0 14 14"><P d="M4.5 5V2H12.5V8H9.5M4 2.5H13M1.5 6H9.5V12H1.5ZM1 6.5H10" w={1.6} /></Svg></Raised>
          <Raised><Svg width="14" height="14" viewBox="0 0 14 14"><P d="M2 1.5L12 12M12 1.5L2 12" w={2.2} /></Svg></Raised>
        </MdiButtons>
      </MenuBar>
      <ToolRow>
        <Strip $w={996}><Row items={ROW1} /></Strip>
        <Strip $gap={360} $w={154}><Row items={ZOOM} /></Strip>
      </ToolRow>
      <ToolRow>
        <Strip $w={1097}><Row items={ROW2} /></Strip>
      </ToolRow>

      <Middle>
        <Toolbox>
          <BoxHead>
            <HeadTitle>Design Toolbox</HeadTitle>
            <Raised $w={16} $h={16}><Svg width="8" height="8" viewBox="0 0 8 8"><path d="M0.5 5.5H7.5L4 2Z" fill="#909090" /></Svg></Raised>
            <Raised $w={16} $h={16}><Svg width="10" height="10" viewBox="0 0 10 10"><P d="M1.5 1.5L8 8.5M8 1.5L1.5 8.5" w={2.2} /></Svg></Raised>
          </BoxHead>
          <BoxBody>
            <BoxTools>
              <Icon n="newDesign" /><Icon n="open" /><Icon n="save" /><Icon n="props" /><Icon n="rename" dim /><Icon n="history" />
            </BoxTools>
            <Tree>
              <TreeRow $p={9}>
                <Svg width="18" height="12" viewBox="0 0 18 12"><rect x="0.5" y="0.5" width="10" height="10" rx="1" fill="#f4f4f4" stroke="#919191" /><path d="M2.5 5.5H8.5" stroke="#3050a0" /><path d="M12 5.5H18" stroke="#888" strokeDasharray="1 1" /></Svg>
                <Spacer $w={2} />
                <Icon n="run" />
                <TreeLabel $m={3}>Design1</TreeLabel>
              </TreeRow>
              <TreeRow $p={36}>
                <Svg width="13" height="22" viewBox="0 0 13 22"><path d="M0.5 0V11.5H13" fill="none" stroke="#777" strokeDasharray="1 1" /></Svg>
                <Icon n="schem" />
                <TreeLabel $m={3} $sel>Design1</TreeLabel>
              </TreeRow>
            </Tree>
          </BoxBody>
          <Tabs $p={2}>
            <Tab $on $w={67} $p={5} $m={0}>Hierarchy</Tab>
            <Tab $w={57} $p={4} $m={2}>Visibility</Tab>
            <Tab $w={17} $p={3} $m={0} $cut>Pr</Tab>
            <Arrows>
              <ArrowBtn><Svg width="8" height="10" viewBox="0 0 8 10"><path d="M6 1V9L2 5Z" /></Svg></ArrowBtn>
              <ArrowBtn><Svg width="8" height="10" viewBox="0 0 8 10"><path d="M2 1V9L6 5Z" /></Svg></ArrowBtn>
            </Arrows>
          </Tabs>
        </Toolbox>

        <Mdi>
          <MdiFrame>
            <Canvas>
              <Sheet><Schematic /></Sheet>
              <VBar />
              <HBar />
            </Canvas>
          </MdiFrame>
          <DocTabs>
            <DocTab><Icon n="schem" /><span>Design1 *</span></DocTab>
            <DocTools><Raised $w={18} $h={18}><Icon n="cascade" size={15} /></Raised></DocTools>
          </DocTabs>
        </Mdi>

        <SideBar>
          {INST.map((g, i) => <SideSlot key={i}><Dim>{g}</Dim></SideSlot>)}
          <SideSep $t={3} $b={7} />
          <SideSlot $h={22}><Dim><path d="M2 2H19V18H2Z" fill={G} /><path d="M1 5V17M19 3V17M3 1.5H18M3 18.5H18" stroke={G} strokeWidth="1.6" strokeDasharray="2 1.4" /></Dim></SideSlot>
          <SideSlot $h={16}><Dim>{sideArrow}</Dim></SideSlot>
          <SideSep $t={2} $b={8} />
          <SideSlot $h={22}><Dim><path d="M1 6L6 8L9 11L14 7L17 8L9 16L4 11Z" fill={G} /><P d="M11 3L17 5L19 9L16 12M5 13L9 17L13 15" s={G} w={1.2} /></Dim></SideSlot>
          <SideSlot $h={14}><Dim>{sideArrow}</Dim></SideSlot>
          <SideSep $t={3} $b={5} />
          <SideSlot $h={22}><Dim><circle cx="5.500" cy="14" r="5" fill={G} /><P d="M3 13.500H8M5.500 11V16" s="#fff" /><P d="M8 12L12 7V3L16 1L19 4M10 14.5H20M12 7L14 4" s={G} w={1.6} /></Dim></SideSlot>
        </SideBar>
      </Middle>

      <Lower>
        <Rail>
          <Raised $w={16} $h={16}><Svg width="10" height="10" viewBox="0 0 10 10"><P d="M1.5 1.5L8 8.5M8 1.5L1.5 8.5" w={2.2} /></Svg></Raised>
          <Raised $w={16} $h={16}><Svg width="8" height="8" viewBox="0 0 8 8"><path d="M3 1V7L6 4Z" fill="#909090" /></Svg></Raised>
          <RailTitle>Spreadsheet View</RailTitle>
        </Rail>
        <Results>
          <ListFrame>
            <List>
              <Line $ls={0.08}>{"Multisim  -  11 января 2024 г., 14:12:46"}</Line>
              <Line $ls={0.055}>Probes do not plot to the Grapher for interactive simulation. Connect an oscilloscope or run a transient simulation to see Grapher data.</Line>
            </List>
          </ListFrame>
          <Tabs $p={1}>
            <Tab $on $w={54} $p={5} $m={0}>Results</Tab>
            <Tab $w={46} $p={4} $m={2}>Nets</Tab>
            <Tab $w={81} $p={4}>Components</Tab>
            <Tab $w={90} $p={4}>Copper layers</Tab>
            <Tab $w={71} $p={4}>Simulation</Tab>
          </Tabs>
        </Results>
      </Lower>

      <Status>
        <Cell $w={1490} $p={1342}>-</Cell>
        <Cell $w={183} $p={4} $ls={0.1}>Design1: Simulating...</Cell>
        <Cell $w={183} $p={4} $ls={-0.22}>Tran: 2.634 s</Cell>
        <Leds>{[0, 1, 2, 3, 4, 5, 6].map((i) => <Led key={i} />)}</Leds>
      </Status>

      <Taskbar>
        <Apps>
          <AppSlot><A>
            <defs><linearGradient id="w" x1="0" y1="0" x2="1" y2="1"><stop offset="0" stopColor="#84cdf8" /><stop offset="1" stopColor="#3a7bd5" /></linearGradient></defs>
            <path d="M3 1.5H14V14H1.5V3Q1.5 1.5 3 1.5ZM15.500 1.5H27Q28.500 1.5 28.500 3V14H15.500ZM1.5 15.500H14V28H3Q1.5 28 1.5 26.500ZM15.500 15.500H28.500V26.500Q28.500 28 27 28H15.500Z" fill="url(#w)" />
          </A></AppSlot>
          <AppSlot $pl={4}><A>
            <path d="M0 2H10L13 5V12H0Z" fill="#e0a00c" /><path d="M0 7H11L14 4.500H30V28H0Z" fill="#ffcf48" />
            <path d="M5.500 28V22Q5.500 19.500 8 19.500H22Q24.500 19.500 24.500 22V28Z" fill="#0d72c4" /><path d="M10 23.500H20" stroke="#0a508c" strokeWidth="1.400" />
          </A></AppSlot>
          <AppSlot $pl={1}><A>
            <path d="M9 7V2.500H22V7" fill="none" stroke="#29b6f6" strokeWidth="2.200" /><path d="M1 6H30V26Q30 30 26 30H5Q1 30 1 26Z" fill="#ececec" />
            <rect x="10" y="12" width="5" height="5" fill="#f25022" /><rect x="16" y="12" width="5" height="5" fill="#7fba00" /><rect x="10" y="18" width="5" height="5" fill="#00a4ef" /><rect x="16" y="18" width="5" height="5" fill="#ffb900" />
          </A></AppSlot>
          <AppSlot $pl={1}><A>
            <defs><linearGradient id="o" x1="0" x2="1"><stop offset="0" stopColor="#ff1b2d" /><stop offset="0.500" stopColor="#c8102a" /><stop offset="1" stopColor="#ff5550" /></linearGradient></defs>
            <path fillRule="evenodd" d="M15 1A14 14 0 1 0 15 29A14 14 0 1 0 15 1ZM15 4.500C19 4.500 22 9 22 15S19 25.500 15 25.500S8 21 8 15S11 4.500 15 4.500Z" fill="url(#o)" />
          </A></AppSlot>
          <AppSlot $pl={2}><A>
            <circle cx="15" cy="15" r="15" fill="#fbc116" /><path d="M2 7.500A15 15 0 0 0 15 30L21.500 18.500L15 15Z" fill="#2da94f" />
            <path d="M15 7.500H28A15 15 0 0 0 2 7.500L8.500 18.500L15 15Z" fill="#e33b2e" /><circle cx="15" cy="15" r="7.500" fill="#fff" /><circle cx="15" cy="15" r="5.900" fill="#2f7de8" />
          </A></AppSlot>
          <AppSlot $pl={1} $bg="#444968" $bar={45}><Svg width="28" height="28" viewBox="0 0 28 28">{circuit}</Svg></AppSlot>
          <AppSlot $pl={1} $bg="#a66033" $bar={45} $c="#ff7a0a"><A>
            <circle cx="15" cy="14.500" r="13.500" fill="#2a9fd8" /><path d="M6 14.500L23 8L20 21L14 17L11 20V16Z" fill="#fff" /><path d="M11 16L19 11L14 17Z" fill="#b5d7ea" />
            <circle cx="22.500" cy="23" r="9" fill="#f13a36" /><text x="22.500" y="27.300" fontSize="12" fill="#fff" textAnchor="middle" fontFamily="Open Sans, sans-serif">48</text>
          </A></AppSlot>
          <AppSlot $bar={35}><A>
            <path d="M8 2H30V9H8Z" fill="#41a5ee" /><path d="M8 8.500H30V15H8Z" fill="#2b7cd3" /><path d="M8 15H30V21.500H8Z" fill="#185abd" /><path d="M8 21.500H30V28H8Z" fill="#103f91" />
            <rect x="0" y="7.500" width="15" height="15" rx="1.500" fill="#1a56b4" /><text x="7.500" y="19.500" fontSize="12" fontWeight="700" fill="#fff" textAnchor="middle" fontFamily="Open Sans, sans-serif">W</text>
          </A></AppSlot>
        </Apps>
        <Tray>
          <Svg width="14" height="14" viewBox="0 0 14 14"><P d="M1.500 10L7 4.500L12.500 10" s="#fff" w={1.300} /></Svg>
          <Spacer $w={13} />
          <Svg width="20" height="16" viewBox="0 0 20 16"><rect x="0.800" y="2" width="16.400" height="12" rx="2.500" fill="none" stroke="#fff" strokeWidth="1.400" /><rect x="3" y="4.200" width="12" height="7.600" rx="1" fill="#fff" /><path d="M18.500 6V10" stroke="#fff" strokeWidth="2.200" /></Svg>
          <Spacer $w={10} />
          <Svg width="20" height="18" viewBox="0 0 20 18"><P d="M1 7A13 13 0 0 1 19 7M3.500 10A9 9 0 0 1 16.500 10M6.200 13A5.400 5.400 0 0 1 13.800 13" s="#fff" w={1.400} /><circle cx="10" cy="15.200" r="1.900" fill="#fff" /></Svg>
          <Spacer $w={10} />
          <Svg width="20" height="18" viewBox="0 0 20 18"><P d="M1 6.500V11.500H4L9 16V2L4 6.500ZM12.500 6L18.500 12M18.500 6L12.500 12" s="#fff" w={1.300} /></Svg>
          <Spacer $w={14} />
          <Txt $s={13.8} $ls={-0.2}>ENG</Txt>
          <Clock>14:22<br />11.01.2024</Clock>
          <Spacer $w={16} />
          <Svg width="30" height="32" viewBox="0 0 30 32"><path d="M3 3H16Q18 3 18 5V16Q18 18 16 18H9L6 22V18H3Q1 18 1 16V5Q1 3 3 3Z" fill="#fff" /><P d="M4 8H15M4 12.500H15" s="#1b222c" w={1.400} /><circle cx="18.500" cy="20.500" r="10" fill="#3a3f47" stroke="#8a8d92" strokeWidth="1" /><text x="18.500" y="25.200" fontSize="13" fontWeight="600" fill="#fff" textAnchor="middle" fontFamily="Open Sans, sans-serif">2</text></Svg>
        </Tray>
      </Taskbar>
    </Screen>
  );
}
